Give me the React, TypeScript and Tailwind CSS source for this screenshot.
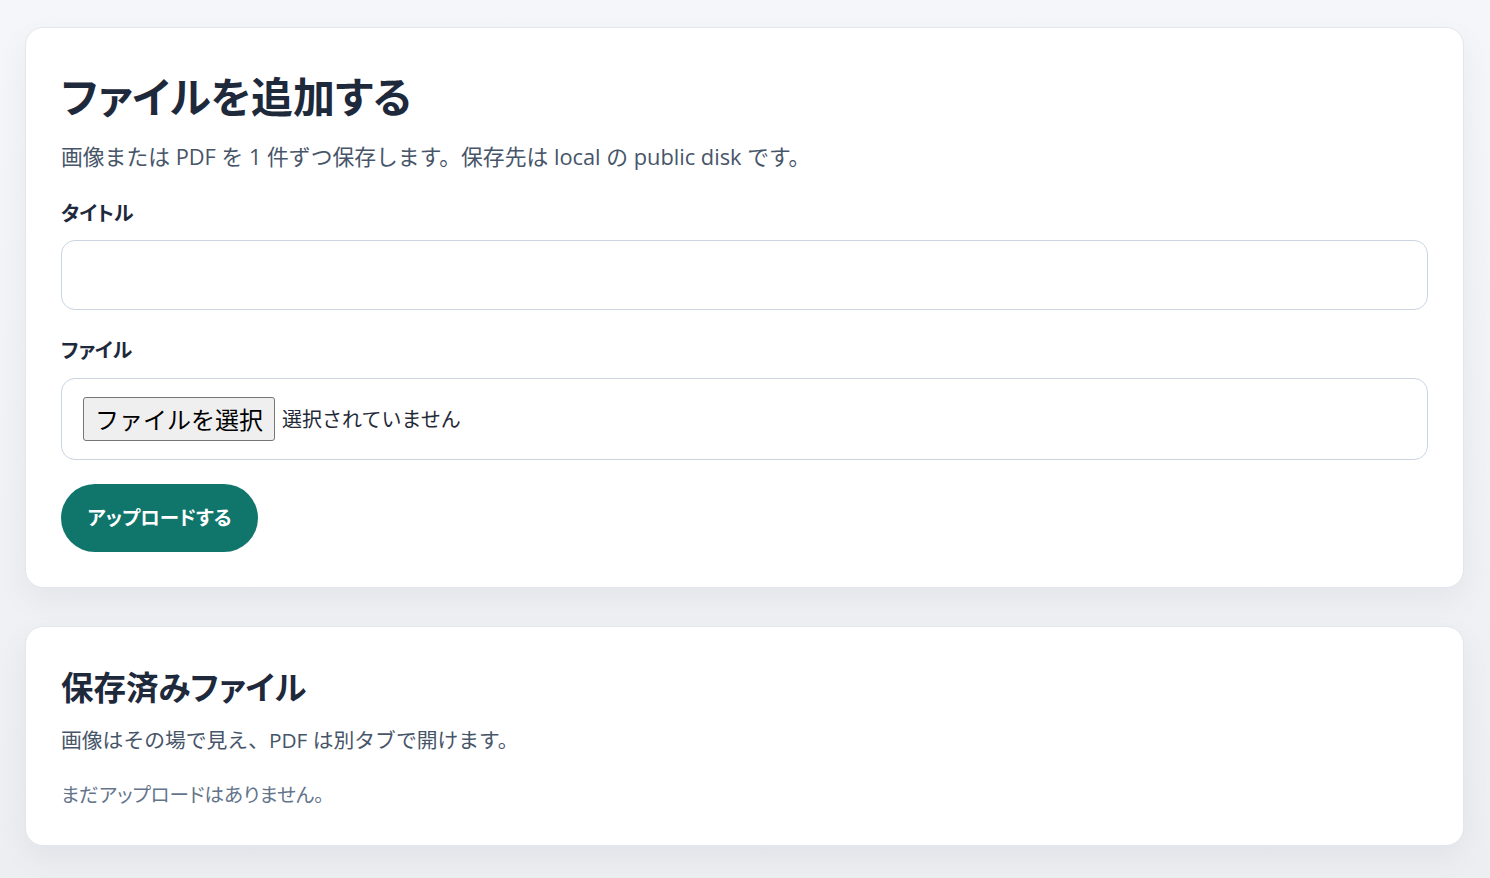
import React from "react";

export default function App() {
  const font = "[font-family:'Open_Sans','Noto_Sans_CJK_JP',sans-serif]";
  return (
    <div
      className={`min-h-screen w-full bg-gradient-to-b from-[#f5f6f9] to-[#eceef2] pl-[25px] pr-[26px] pt-[27px] pb-[32px] ${font}`}
    >
      <div className="flex flex-col gap-[38px]">
        <section className="rounded-[18px] border border-[#e3e6ec] bg-white px-[35px] pt-[40px] pb-[35px] shadow-[0_12px_32px_rgba(15,23,42,0.05)]">
          <h1 className="text-[42px] leading-[58px] font-bold text-[#1e293b] [font-feature-settings:'palt']">
            ファイルを追加する
          </h1>
          <p className="mt-[16px] text-[21.8px] leading-[30px] text-[#475569]">
            画像または PDF を 1 件ずつ保存します。保存先は local の public disk です。
          </p>
          <form className="flex flex-col" onSubmit={(e) => e.preventDefault()}>
            <label className="mt-[28px] text-[20px] leading-[28px] font-bold text-[#1e293b] [font-feature-settings:'palt']">
              タイトル
            </label>
            <input
              type="text"
              className="mt-[12px] h-[70px] w-full rounded-[14px] border border-[#cbd5e1] bg-white px-4 text-[20px] outline-none"
            />
            <label className="mt-[27px] text-[20px] leading-[28px] font-bold text-[#1e293b] [font-feature-settings:'palt']">
              ファイル
            </label>
            <div className="mt-[13px] flex h-[82px] w-full items-center rounded-[14px] border border-[#cbd5e1] bg-white px-[21px]">
              <span className="flex h-[44px] w-[192px] items-center justify-center rounded-[3px] border border-[#767676] bg-[#efefef] text-[24px] text-black [font-family:'Noto_Sans_CJK_JP',sans-serif]">
                ファイルを選択
              </span>
              <span className="ml-[7px] text-[20px] text-[#1f2937] [font-family:'Noto_Sans_CJK_JP',sans-serif]">
                選択されていません
              </span>
            </div>
            <div className="mt-[24px]">
              <button
                type="submit"
                className="h-[68px] w-[197px] rounded-full bg-[#10766c] text-[19.5px] font-bold text-white [font-feature-settings:'palt']"
              >
                アップロードする
              </button>
            </div>
          </form>
        </section>

        <section className="rounded-[18px] border border-[#e3e6ec] bg-white px-[35px] pt-[40px] pb-[35px] shadow-[0_12px_32px_rgba(15,23,42,0.05)]">
          <h2 className="text-[32.5px] leading-[42px] font-bold text-[#1e293b] [font-feature-settings:'palt']">
            保存済みファイル
          </h2>
          <p className="mt-[16px] text-[20.8px] leading-[30px] text-[#475569]">
            画像はその場で見え、PDF は別タブで開けます。
          </p>
          <p className="mt-[25px] text-[19.6px] leading-[30px] text-[#64748b] [font-feature-settings:'palt']">
            まだアップロードはありません。
          </p>
        </section>
      </div>
    </div>
  );
}
